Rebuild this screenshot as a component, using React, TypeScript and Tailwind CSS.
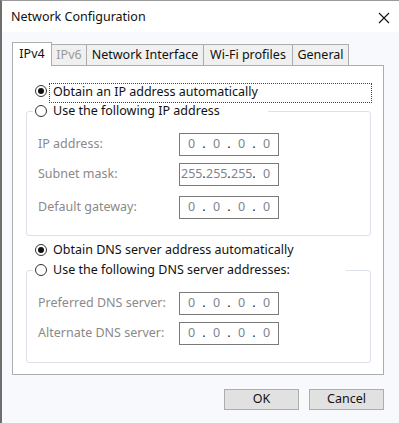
import React from 'react';

const font = { fontFamily: '"Noto Sans", "Liberation Sans", sans-serif' };

const tabs = [
	{ label: 'IPv4', w: 'w-[40px]', active: true },
	{ label: 'IPv6', w: 'w-[35px]', disabled: true },
	{ label: 'Network Interface', w: 'w-[117px]' },
	{ label: 'Wi-Fi profiles', w: 'w-[89px]' },
	{ label: 'General', w: 'w-[56px]' },
];

function Radio({ checked }: { checked?: boolean }) {
	return (
		<span className="w-[12px] h-[12px] shrink-0 rounded-full border border-[#333] bg-white flex items-center justify-center">
			{checked && <span className="w-[6px] h-[6px] rounded-full bg-[#111]" />}
		</span>
	);
}

function IpBox({ parts }: { parts: string[] }) {
	return (
		<div className="w-[100px] h-[23px] border border-[#7a7a7a] bg-white flex items-center pl-[1px] text-[12.5px] leading-none">
			{parts.map((p, i) => (
				<React.Fragment key={i}>
					{i > 0 && <span className="w-[4px] text-center text-[#222]">.</span>}
					<span className="w-[21px] text-center text-[#7d8590] whitespace-nowrap">{p}</span>
				</React.Fragment>
			))}
		</div>
	);
}

function Field({ label, parts, className = '' }: { label: string; parts: string[]; className?: string }) {
	return (
		<div className={`flex items-center ${className}`}>
			<span className="w-[141px] text-[12.5px] text-[#8a8a8a]">{label}</span>
			<IpBox parts={parts} />
		</div>
	);
}

const zero = ['0', '0', '0', '0'];

export default function App() {
	return (
		<div
			className="w-[399px] h-[423px] bg-[#f7f9fd] border-t border-t-[#9a9a9a] border-l-2 border-l-[#6f6f6f] flex flex-col text-[#111]"
			style={font}
		>
			{/* Title bar */}
			<div className="h-[31px] bg-white flex items-center justify-between pl-[9px] pr-[8px] pt-[2px] shrink-0">
				<span className="text-[12.5px]">Network Configuration</span>
				<svg width="12" height="12" viewBox="0 0 12 12" className="mr-[1px]">
					<path d="M1 1L11 11M11 1L1 11" stroke="#111" strokeWidth="1.1" fill="none" />
				</svg>
			</div>

			<div className="ml-[10px] mt-[10px] w-[372px]">
				{/* Tabs */}
				<div className="flex items-end h-[23px]">
					{tabs.map((t, i) => (
						<div
							key={t.label}
							className={`${t.w} flex items-center justify-center text-[12.5px] border-t border-r border-[#adadad] ${
								i === 0 ? 'border-l' : ''
							} ${
								t.active
									? 'h-[24px] bg-white relative z-10 -mb-px pb-[1px]'
									: 'h-[21px] bg-[#f0f0f0]'
							} ${t.disabled ? 'text-[#9a9a9a]' : ''}`}
						>
							{t.label}
						</div>
					))}
				</div>

				{/* Panel */}
				<div className="h-[310px] bg-white border border-[#adadad] text-[12.5px]">
					<div className="flex items-start ml-[22px] mt-[17px]">
						<span className="mt-[2px]">
							<Radio checked />
						</span>
						<span className="ml-[2px] w-[323px] h-[20px] border border-dotted border-[#444] pl-[3px] leading-[15px]">
							Obtain an IP address automatically
						</span>
					</div>

					<fieldset className="ml-[13px] w-[345px] border border-[#dce1e9] rounded-[3px] pl-[11px] pt-[14px] pb-[16px]">
						<legend className="ml-[-5px] w-[235px] h-[16px] bg-white pl-[2px] flex items-center">
							<Radio />
							<span className="ml-[6px]">Use the following IP address</span>
						</legend>
						<Field label="IP address:" parts={zero} className="mb-[7px]" />
						<Field label="Subnet mask:" parts={['255', '255', '255', '0']} className="mb-[10px]" />
						<Field label="Default gateway:" parts={zero} />
					</fieldset>

					<div className="flex items-center h-[16px] mt-[6px] ml-[22px]">
						<Radio checked />
						<span className="ml-[6px]">Obtain DNS server address automatically</span>
					</div>

					<fieldset className="ml-[13px] mt-[4px] w-[345px] border border-[#dce1e9] rounded-[3px] pl-[11px] pt-[14px] pb-[17px]">
						<legend className="ml-[-5px] w-[313px] h-[16px] bg-white pl-[2px] flex items-center">
							<Radio />
							<span className="ml-[6px]">Use the following DNS server addresses:</span>
						</legend>
						<Field label="Preferred DNS server:" parts={zero} className="mb-[7px]" />
						<Field label="Alternate DNS server:" parts={zero} />
					</fieldset>
				</div>

				{/* Buttons */}
				<div className="flex justify-end gap-[10px] mt-[14px]">
					<button className="w-[75px] h-[21px] bg-[#e1e1e1] border border-[#adadad] text-[12.5px] leading-none">OK</button>
					<button className="w-[75px] h-[21px] bg-[#e1e1e1] border border-[#adadad] text-[12.5px] leading-none">Cancel</button>
				</div>
			</div>
		</div>
	);
}
